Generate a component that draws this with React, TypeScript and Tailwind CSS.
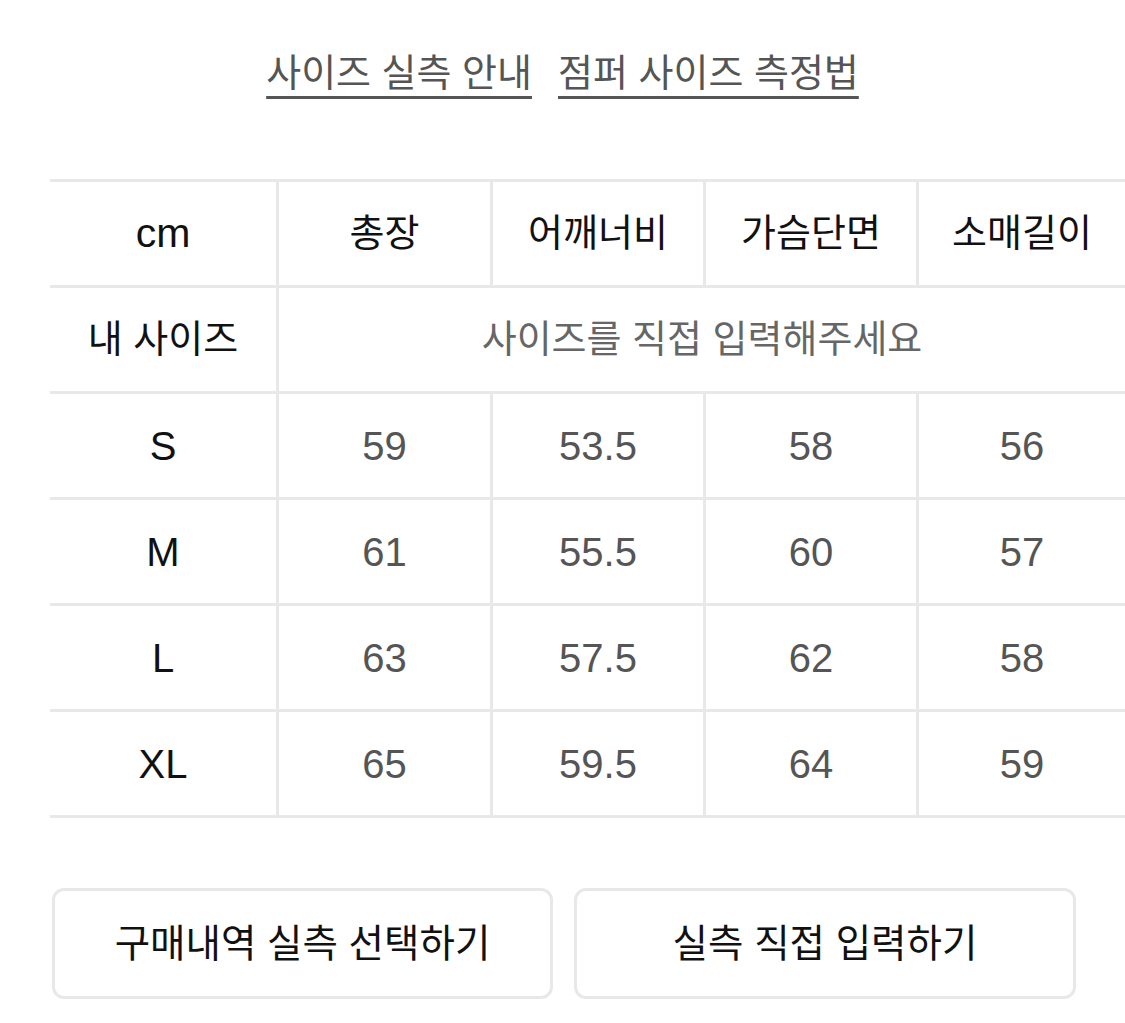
import React from "react";

const font = { fontFamily: '"Liberation Sans", "Noto Sans CJK KR", sans-serif' };

const headers = ["총장", "어깨너비", "가슴단면", "소매길이"];
const rows: [string, string[]][] = [
  ["S", ["59", "53.5", "58", "56"]],
  ["M", ["61", "55.5", "60", "57"]],
  ["L", ["63", "57.5", "62", "58"]],
  ["XL", ["65", "59.5", "64", "59"]],
];

export default function App() {
  return (
    <div className="w-[1125px] h-[1023px] bg-white overflow-hidden" style={font}>
      <div className="h-[179px] pt-[47px] flex justify-center gap-[26px] text-[38px] leading-[52px] text-[#555555]">
        <span className="underline decoration-[3px] underline-offset-[10px]">사이즈 실측 안내</span>
        <span className="underline decoration-[3px] underline-offset-[10px]">점퍼 사이즈 측정법</span>
      </div>
      <div className="ml-[50px] border-b-[3px] border-[#e8e8e8]">
        <div className="grid grid-cols-[226px_214px_213px_213px_1fr] h-[106px] border-t-[3px] border-[#e8e8e8] text-[38px] text-[#111111]">
          <div className="flex items-center justify-center text-[41px]">cm</div>
          {headers.map((h) => (
            <div key={h} className="flex items-center justify-center border-l-[3px] border-[#e8e8e8]">
              {h}
            </div>
          ))}
        </div>
        <div className="grid grid-cols-[226px_1fr] h-[106px] border-t-[3px] border-[#e8e8e8] text-[38px]">
          <div className="flex items-center justify-center text-[#111111]">내 사이즈</div>
          <div className="flex items-center justify-center border-l-[3px] border-[#e8e8e8] text-[#666666]">
            사이즈를 직접 입력해주세요
          </div>
        </div>
        {rows.map(([size, vals]) => (
          <div
            key={size}
            className="grid grid-cols-[226px_214px_213px_213px_1fr] h-[106px] border-t-[3px] border-[#e8e8e8] text-[40px]"
          >
            <div className="flex items-center justify-center text-[#111111]">{size}</div>
            {vals.map((v, i) => (
              <div key={i} className="flex items-center justify-center border-l-[3px] border-[#e8e8e8] text-[#555555]">
                {v}
              </div>
            ))}
          </div>
        ))}
      </div>
      <div className="mt-[70px] ml-[52px] flex gap-[21px]">
        <button className="w-[501px] h-[111px] rounded-[12px] border-[3px] border-[#e8e8e8] bg-white text-[38.5px] text-[#111111] flex items-center justify-center">
          구매내역 실측 선택하기
        </button>
        <button className="w-[502px] h-[111px] rounded-[12px] border-[3px] border-[#e8e8e8] bg-white text-[38.5px] text-[#111111] flex items-center justify-center">
          실측 직접 입력하기
        </button>
      </div>
    </div>
  );
}
